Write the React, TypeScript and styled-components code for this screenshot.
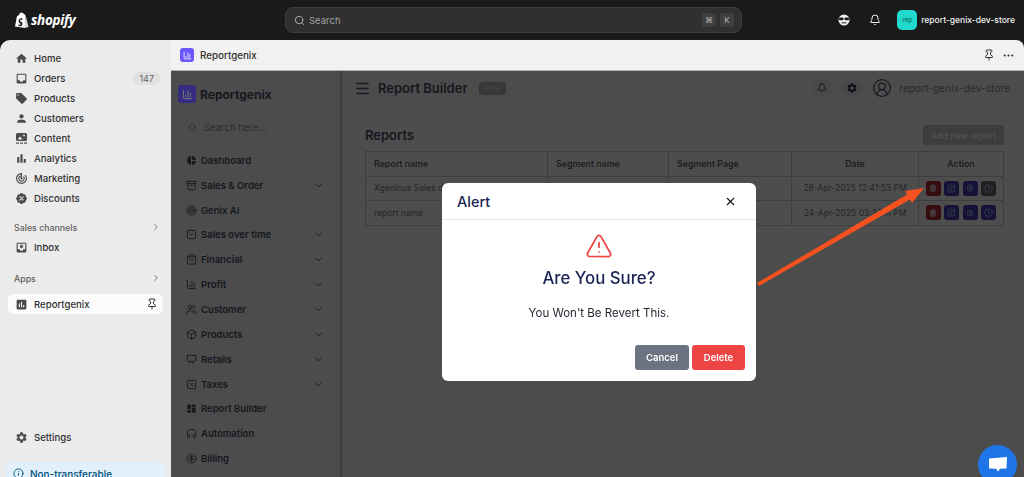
import styled, { createGlobalStyle } from "styled-components";
import {
  Archive,
  Bell,
  Box,
  ChevronDown,
  ChevronRight,
  CircleDollarSign,
  CircleUserRound,
  Clock,
  Ellipsis,
  Headphones,
  Info,
  Menu,
  Pin,
  Presentation,
  Search,
  Settings,
  ShoppingBag,
  SquareChevronDown,
  SquarePen,
  SquareX,
  Target,
  Trash2,
  TriangleAlert,
  Users,
  X,
  ChartColumn,
} from "lucide-react";
import {
  MdAssessment,
  MdBarChart,
  MdDashboard,
  MdHome,
  MdInbox,
  MdLocalOffer,
  MdMoveToInbox,
  MdPerson,
  MdPieChart,
  MdSettings,
  MdTrackChanges,
} from "react-icons/md";
import { TbRosetteDiscountFilled } from "react-icons/tb";

const GlobalStyle = createGlobalStyle`
  html, body {
    margin: 0;
    height: 100%;
    overflow: hidden;
    background: #1a1a1a;
    font-family: Inter, "Liberation Sans", sans-serif;
  }
  * { box-sizing: border-box; }
`;

function ContentIcon() {
  return (
    <svg width="13" height="13" viewBox="0 0 13 13">
      <rect x="1" y="1" width="11" height="8" rx="1.5" fill="#4a4a4a" />
      <circle cx="9" cy="3.5" r="1" fill="#ebebeb" />
      <path d="M2.5 7.5 5 4.5l2.5 3z" fill="#ebebeb" />
      <rect x="1" y="10.5" width="3" height="1.2" fill="#4a4a4a" />
      <rect x="5" y="10.5" width="3" height="1.2" fill="#4a4a4a" />
      <rect x="9" y="10.5" width="3" height="1.2" fill="#4a4a4a" />
    </svg>
  );
}

const storeNav = [
  { label: "Home", icon: <MdHome /> },
  { label: "Orders", icon: <MdInbox />, count: 147 },
  { label: "Products", icon: <MdLocalOffer /> },
  { label: "Customers", icon: <MdPerson /> },
  { label: "Content", icon: <ContentIcon /> },
  { label: "Analytics", icon: <MdBarChart /> },
  { label: "Marketing", icon: <MdTrackChanges /> },
  { label: "Discounts", icon: <TbRosetteDiscountFilled /> },
];

const appNav = [
  { label: "Dashboard", icon: <MdPieChart size={13} /> },
  { label: "Sales & Order", icon: <Archive />, more: true },
  { label: "Genix AI", icon: <Target /> },
  { label: "Sales over time", icon: <SquareChevronDown />, more: true },
  { label: "Financial", icon: <ShoppingBag />, more: true },
  { label: "Profit", icon: <ChartColumn />, more: true },
  { label: "Customer", icon: <Users />, more: true },
  { label: "Products", icon: <Box />, more: true },
  { label: "Retails", icon: <Presentation />, more: true },
  { label: "Taxes", icon: <SquareX />, more: true },
  { label: "Report Builder", icon: <MdDashboard size={13} /> },
  { label: "Automation", icon: <Headphones /> },
  { label: "Billing", icon: <CircleDollarSign /> },
];

const reports = [
  { name: "Xgenious Sales data", date: "28-Apr-2025 12:41:53 PM", paused: true },
  { name: "report name", date: "24-Apr-2025 03:37:11 PM", paused: false },
];

function ShopifyBag() {
  return (
    <svg width="15" height="17" viewBox="0 0 15 17">
      <path
        d="M1 14.6 3 3.9c1-.4 1.6-.6 1.8-.7C5.3 1.6 6.3.4 7.6.5c.3 0 .6.2.8.5.9 0 1.4.7 1.6 1.5l1-.3.4 13.7L.9 14.6z"
        fill="#fff"
      />
      <path d="M11.3 2.2 14.6 15l-4 1z" fill="#d8d8d8" />
      <path
        d="M8.6 6.4 8.1 8c-1.4-.6-2.3 0-2.2.6.1 1 2.7 1.2 2.6 3.5-.1 2.2-2.8 2.7-4.2 1.6l.4-1.5c.8.6 2 .9 2.1.1.1-1.1-2.2-1.1-2.2-3.4C4.6 6.7 6.9 5.7 8.6 6.4z"
        fill="#1a1a1a"
      />
    </svg>
  );
}

function App() {
  return (
    <>
      <GlobalStyle />
      <TopBar>
        <Brand>
          <ShopifyBag />
          <BrandName>shopify</BrandName>
        </Brand>
        <SearchBar>
          <Search size={11} />
          <SearchText>Search</SearchText>
          <Key>⌘</Key>
          <Key>K</Key>
        </SearchBar>
        <TopActions>
          <AgentFace>
            <svg width="12" height="12" viewBox="0 0 12 12">
              <circle cx="6" cy="6" r="5.5" fill="#f1f1f1" />
              <rect x="1" y="3.5" width="4.5" height="2.8" rx="1" fill="#1a1a1a" />
              <rect x="6.5" y="3.5" width="4.5" height="2.8" rx="1" fill="#1a1a1a" />
              <rect x="3.5" y="8.3" width="5" height="1" fill="#1a1a1a" />
            </svg>
          </AgentFace>
          <Bell size={12} color="#f1f1f1" fill="#1a1a1a" />
          <StoreAvatar>rep</StoreAvatar>
          <StoreName>report-genix-dev-store</StoreName>
        </TopActions>
      </TopBar>
      <Body>
        <Sidebar>
          <NavGroup>
            {storeNav.map((item) => (
              <NavRow key={item.label}>
                <NavIcon>{item.icon}</NavIcon>
                <NavLabel>{item.label}</NavLabel>
                {item.count && <Count>{item.count}</Count>}
              </NavRow>
            ))}
          </NavGroup>
          <SectionTitle $gap={9}>
            Sales channels
            <ChevronRight size={10} />
          </SectionTitle>
          <NavRow>
            <NavIcon>
              <MdMoveToInbox />
            </NavIcon>
            <NavLabel>Inbox</NavLabel>
          </NavRow>
          <SectionTitle $gap={11}>
            Apps
            <ChevronRight size={10} />
          </SectionTitle>
          <ActiveRow>
            <NavIcon>
              <MdAssessment />
            </NavIcon>
            <NavLabel>Reportgenix</NavLabel>
            <Pin size={12} color="#303030" />
          </ActiveRow>
          <SidebarFoot>
            <NavRow>
              <NavIcon>
                <MdSettings />
              </NavIcon>
              <NavLabel>Settings</NavLabel>
            </NavRow>
            <Banner>
              <Info size={11} />
              Non-transferable
            </Banner>
          </SidebarFoot>
        </Sidebar>
        <Content>
          <AppHeader>
            <AppLogo $size={14}>
              <ChartColumn size={9} color="#fff" />
            </AppLogo>
            <AppHeaderName>Reportgenix</AppHeaderName>
            <Pin size={12} color="#303030" />
            <Ellipsis size={13} color="#303030" />
          </AppHeader>
          <Frame>
            <InnerSidebar>
              <InnerBrand>
                <AppLogo $size={18}>
                  <ChartColumn size={11} color="#fff" />
                </AppLogo>
                Reportgenix
              </InnerBrand>
              <InnerSearch>
                <Search size={9} />
                Search here...
              </InnerSearch>
              <InnerNav>
                {appNav.map((item) => (
                  <InnerRow key={item.label}>
                    {item.icon}
                    <InnerLabel>{item.label}</InnerLabel>
                    {item.more && <ChevronDown size={11} />}
                  </InnerRow>
                ))}
              </InnerNav>
            </InnerSidebar>
            <Main>
              <PageBar>
                <MenuIcon size={17} />
                <PageTitle>Report Builder</PageTitle>
                <PlanBadge>Free</PlanBadge>
                <PageActions>
                  <RoundButton>
                    <Bell size={10} />
                  </RoundButton>
                  <RoundButton>
                    <MdSettings size={12} />
                  </RoundButton>
                  <CircleUserRound size={20} strokeWidth={1.5} />
                  <PageStore>report-genix-dev-store</PageStore>
                </PageActions>
              </PageBar>
              <Card>
                <CardHead>
                  <CardTitle>Reports</CardTitle>
                  <AddButton>Add new report</AddButton>
                </CardHead>
                <Table>
                  <colgroup>
                    <col width="182" />
                    <col width="121" />
                    <col width="123" />
                    <col width="127" />
                    <col width="85" />
                  </colgroup>
                  <thead>
                    <tr>
                      <Th>Report name</Th>
                      <Th>Segment name</Th>
                      <Th>Segment Page</Th>
                      <Th $center>Date</Th>
                      <Th $center>Action</Th>
                    </tr>
                  </thead>
                  <tbody>
                    {reports.map((report) => (
                      <tr key={report.name}>
                        <Td>{report.name}</Td>
                        <Td />
                        <Td />
                        <Td $center>{report.date}</Td>
                        <Td $center>
                          <ActionRow>
                            <ActionButton $color="#6b1a1e">
                              <Trash2 size={8} fill="#8a6a70" />
                            </ActionButton>
                            <ActionButton $color="#2a2570">
                              <SquarePen size={9} />
                            </ActionButton>
                            <ActionButton $color="#2a2570">
                              <Settings size={8} />
                            </ActionButton>
                            <ActionButton $color={report.paused ? "#3f4042" : "#2a2570"}>
                              <Clock size={9} />
                            </ActionButton>
                          </ActionRow>
                        </Td>
                      </tr>
                    ))}
                  </tbody>
                </Table>
              </Card>
            </Main>
            <Backdrop />
            <Arrow viewBox="0 0 682 406" width="682" height="406">
              <path d="M415 212 L565 123.5 L563 120 L582 117 L570 132 L568 128.5 L417 215 Z" fill="#f4511e" />
            </Arrow>
            <ChatBubble>
              <svg width="20" height="17" viewBox="0 0 20 17">
                <path d="M1 2.5 19 1l-.5 11.5-6.5.2L10 15.5l-2-2.8-7-.3z" fill="#fff" />
              </svg>
            </ChatBubble>
          </Frame>
        </Content>
      </Body>
      <Modal>
        <ModalHead>
          <ModalTitle>Alert</ModalTitle>
          <X size={13} color="#111" />
        </ModalHead>
        <ModalBody>
          <TriangleAlert size={28} color="#ef4444" strokeWidth={1.5} />
          <ModalQuestion>Are You Sure?</ModalQuestion>
          <ModalText>You Won't Be Revert This.</ModalText>
        </ModalBody>
        <ModalFoot>
          <ModalButton $color="#6b7280" $width={54}>Cancel</ModalButton>
          <ModalButton $color="#ef4444" $width={53}>Delete</ModalButton>
        </ModalFoot>
      </Modal>
    </>
  );
}

const TopBar = styled.header`
  display: grid;
  grid-template-columns: 285px 457px 1fr;
  align-items: center;
  height: 40px;
  background: #1a1a1a;
`;

const Brand = styled.div`
  display: flex;
  align-items: center;
  gap: 2px;
  padding-left: 14px;
`;

const BrandName = styled.span`
  font-family: "Open Sans", sans-serif;
  font-size: 13.5px;
  font-weight: 700;
  font-style: italic;
  letter-spacing: -0.3px;
  color: #fff;
`;

const SearchBar = styled.div`
  display: flex;
  align-items: center;
  gap: 4px;
  height: 26px;
  padding: 0 7px 0 8px;
  color: #b5b5b5;
  background: #303030;
  border: 1px solid #3d3d3d;
  border-radius: 8px;
`;

const SearchText = styled.span`
  flex: 1;
  font-size: 9.5px;
  color: #a0a0a0;
`;

const Key = styled.span`
  display: flex;
  align-items: center;
  justify-content: center;
  width: 14px;
  height: 14px;
  font-size: 8px;
  color: #b5b5b5;
  background: #3f3f3f;
  border-radius: 3px;
`;

const TopActions = styled.div`
  display: flex;
  align-items: center;
  justify-content: flex-end;
  padding-right: 9px;
`;

const AgentFace = styled.span`
  display: flex;
  margin-right: 19px;
`;

const StoreAvatar = styled.span`
  display: flex;
  align-items: center;
  justify-content: center;
  width: 20px;
  height: 20px;
  margin: 0 4px 0 16px;
  font-size: 6.5px;
  color: #0b5a55;
  background: #21d9cd;
  border-radius: 5px;
`;

const StoreName = styled.span`
  font-size: 8.5px;
  font-weight: 500;
  color: #f1f1f1;
`;

const Body = styled.div`
  display: grid;
  grid-template-columns: 171px 1fr;
  height: calc(100vh - 40px);
`;

const Sidebar = styled.nav`
  display: flex;
  flex-direction: column;
  padding: 8px 6px 0;
  background: #ebebeb;
  border-top-left-radius: 10px;
  overflow: hidden;
`;

const NavGroup = styled.div`
  display: flex;
  flex-direction: column;
`;

const NavRow = styled.div`
  display: flex;
  align-items: center;
  gap: 6px;
  height: 20px;
  padding: 0 5px 0 9px;
  font-size: 9.6px;
  font-weight: 500;
  color: #303030;
`;

const NavIcon = styled.span`
  display: flex;
  font-size: 13px;
  color: #4a4a4a;
`;

const NavLabel = styled.span`
  flex: 1;
`;

const Count = styled.span`
  padding: 1px 6px;
  font-size: 9px;
  font-weight: 400;
  color: #616161;
  background: #e0e0e0;
  border-radius: 6px;
`;

const SectionTitle = styled.div<{ $gap: number }>`
  display: flex;
  align-items: center;
  justify-content: space-between;
  height: 20px;
  margin-top: ${({ $gap }) => $gap}px;
  padding: 0 4px 0 8px;
  font-size: 8.8px;
  font-weight: 500;
  color: #616161;
`;

const ActiveRow = styled(NavRow)`
  margin: 6px 2px 0;
  padding: 0 5px 0 7px;
  background: #fbfbfb;
  border-radius: 6px;
`;

const SidebarFoot = styled.div`
  display: flex;
  flex-direction: column;
  gap: 15px;
  margin-top: auto;
  margin-bottom: -6px;
`;

const Banner = styled.div`
  display: flex;
  align-items: center;
  gap: 6px;
  height: 21px;
  padding: 2px 7px 0;
  font-size: 10px;
  font-weight: 500;
  color: #00527c;
  background: #e2f0fb;
  border-radius: 8px 8px 0 0;
`;

const Content = styled.main`
  display: flex;
  flex-direction: column;
  min-width: 0;
  border-top-right-radius: 8px;
  overflow: hidden;
`;

const AppHeader = styled.div`
  display: flex;
  align-items: center;
  gap: 6px;
  height: 31px;
  padding: 0 9px;
  background: #f1f1f1;
  border-bottom: 1px solid #b0b0b0;
  & > svg:last-child {
    margin-left: 1px;
  }
`;

const AppHeaderName = styled.span`
  flex: 1;
  font-size: 9.8px;
  font-weight: 500;
  color: #303030;
`;

const AppLogo = styled.span<{ $size: number }>`
  display: flex;
  align-items: center;
  justify-content: center;
  width: ${({ $size }) => $size}px;
  height: ${({ $size }) => $size}px;
  background: #6b57ff;
  border-radius: 3px;
`;

const Frame = styled.div`
  position: relative;
  flex: 1;
  display: flex;
  min-height: 0;
  color: #2c3140;
  background: #989898;
`;

const InnerSidebar = styled.aside`
  flex: none;
  width: 171px;
  padding: 14px 7px 0;
  border-right: 2px solid #7a7a7a;
`;

const InnerBrand = styled.div`
  display: flex;
  align-items: center;
  gap: 4px;
  height: 18px;
  font-size: 12px;
  font-weight: 700;
  color: #2c3140;
`;

const InnerSearch = styled.div`
  display: flex;
  align-items: center;
  gap: 7px;
  height: 25px;
  margin-top: 12px;
  padding: 0 9px;
  font-size: 9.5px;
  color: #565963;
  border: 1px solid #939393;
  border-radius: 4px;
`;

const InnerNav = styled.div`
  display: flex;
  flex-direction: column;
  margin-top: 8px;
`;

const InnerRow = styled.div`
  display: flex;
  align-items: center;
  gap: 4px;
  height: 24.85px;
  padding: 0 9px 0 8px;
  font-size: 9.5px;
  font-weight: 600;
  color: #2c3140;
  & > svg:first-child {
    flex: none;
    width: 11px;
    height: 11px;
  }
`;

const InnerLabel = styled.span`
  flex: 1;
`;

const Main = styled.section`
  flex: 1;
  min-width: 0;
`;

const PageBar = styled.div`
  display: flex;
  align-items: center;
  height: 34px;
  padding: 0 14px 0 13px;
  color: #2c3140;
`;

const MenuIcon = styled(Menu)`
  margin-left: -1px;
`;

const PageTitle = styled.h1`
  margin: 0 0 0 7px;
  font-size: 13px;
  font-weight: 600;
`;

const PlanBadge = styled.span`
  margin-left: 11px;
  padding: 2px 6px;
  font-size: 7.5px;
  color: #909090;
  background: #6e7075;
  border-radius: 3px;
`;

const PageActions = styled.div`
  display: flex;
  align-items: center;
  gap: 10px;
  margin-left: auto;
`;

const RoundButton = styled.span`
  display: flex;
  align-items: center;
  justify-content: center;
  width: 20px;
  height: 20px;
  color: #1c2030;
  background: #929292;
  border-radius: 50%;
`;

const PageStore = styled.span`
  margin-left: -3px;
  font-size: 10.2px;
  color: #54565e;
`;

const Card = styled.div`
  margin: 17px 11px 0 13px;
  padding: 0 10px 11px;
  background: #9b9b9b;
  border-radius: 4px;
`;

const CardHead = styled.div`
  display: flex;
  align-items: center;
  justify-content: space-between;
  height: 29px;
  padding-bottom: 3px;
`;

const CardTitle = styled.h2`
  margin: 0;
  font-size: 13px;
  font-weight: 600;
  color: #2c3140;
`;

const AddButton = styled.span`
  display: flex;
  align-items: center;
  justify-content: center;
  width: 81px;
  height: 20px;
  margin-right: -1px;
  font-size: 8.8px;
  font-weight: 600;
  color: #9d9fa3;
  background: #777a7e;
  border-radius: 3px;
`;

const Table = styled.table`
  width: 638px;
  table-layout: fixed;
  border-collapse: collapse;
`;

const Th = styled.th<{ $center?: boolean }>`
  height: 24.5px;
  padding: 0 8px;
  text-align: ${({ $center }) => ($center ? "center" : "left")};
  font-size: 8.9px;
  font-weight: 500;
  color: #2c3038;
  border: 1px solid #7d7d7d;
`;

const Td = styled.td<{ $center?: boolean }>`
  height: 24.5px;
  padding: 0 8px;
  text-align: ${({ $center }) => ($center ? "center" : "left")};
  font-size: 8.5px;
  white-space: nowrap;
  color: #484b52;
  border: 1px solid #7d7d7d;
`;

const ActionRow = styled.div`
  display: flex;
  justify-content: center;
  gap: 3.5px;
  margin: 0 -8px;
`;

const ActionButton = styled.span<{ $color: string }>`
  display: flex;
  align-items: center;
  justify-content: center;
  width: 15px;
  height: 15px;
  color: #8a8898;
  background: ${({ $color }) => $color};
  border-radius: 3px;
`;

const Backdrop = styled.div`
  position: absolute;
  inset: 0;
  z-index: 1;
  background: rgba(0, 0, 0, 0.5);
`;

const Arrow = styled.svg`
  position: absolute;
  top: 0;
  left: 171px;
  z-index: 2;
  pointer-events: none;
`;

const ChatBubble = styled.span`
  position: absolute;
  top: 374px;
  left: 807px;
  z-index: 2;
  display: flex;
  align-items: center;
  justify-content: center;
  width: 39px;
  height: 39px;
  background: #1f74e8;
  border-radius: 50%;
`;

const Modal = styled.div`
  position: fixed;
  top: 183px;
  left: 442px;
  z-index: 3;
  display: flex;
  flex-direction: column;
  width: 314px;
  height: 198px;
  background: #fff;
  border-radius: 6px;
`;

const ModalHead = styled.div`
  display: flex;
  align-items: center;
  justify-content: space-between;
  height: 37px;
  padding: 0 19px 0 15px;
  border-bottom: 1px solid #e5e7eb;
`;

const ModalTitle = styled.h3`
  margin: 0;
  font-size: 14.5px;
  font-weight: 500;
  color: #1a2454;
`;

const ModalBody = styled.div`
  flex: 1;
  display: flex;
  flex-direction: column;
  align-items: center;
  padding-top: 12px;
`;

const ModalQuestion = styled.div`
  margin-top: 7px;
  font-size: 16.8px;
  font-weight: 500;
  line-height: 22px;
  color: #1a2454;
`;

const ModalText = styled.p`
  margin: 17px 0 0;
  font-size: 11.5px;
  line-height: 14px;
  color: #1f2430;
`;

const ModalFoot = styled.div`
  display: flex;
  justify-content: flex-end;
  gap: 3px;
  padding: 0 11px 11px;
`;

const ModalButton = styled.button<{ $color: string; $width: number }>`
  width: ${({ $width }) => $width}px;
  height: 25px;
  padding: 0;
  font-family: inherit;
  font-size: 9.5px;
  font-weight: 600;
  color: #fff;
  background: ${({ $color }) => $color};
  border: none;
  border-radius: 3px;
`;

export default App;
